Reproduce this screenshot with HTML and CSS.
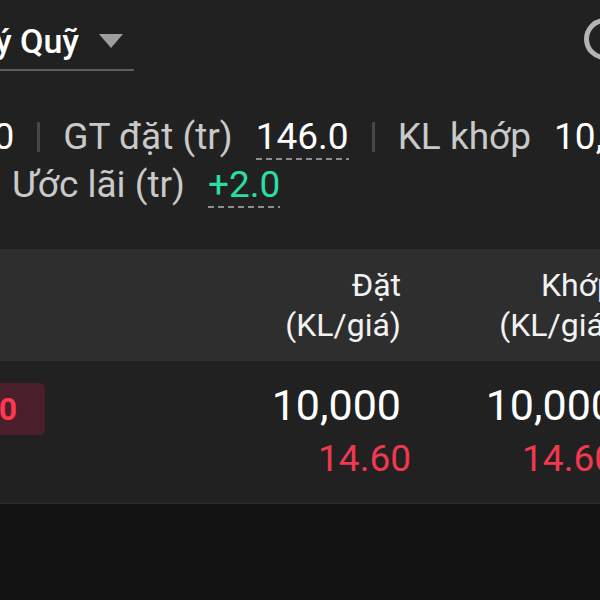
FILE: index.html
```html
<!DOCTYPE html>
<html lang="vi">
<head>
    <meta charset="UTF-8">
    <meta name="viewport" content="width=device-width, initial-scale=1.0">
    <title>Quản lý Quỹ</title>
    <link rel="stylesheet" href="styles.css">
</head>
<body>

    <div class="screen">
        <div class="top">
            <div class="title-bar">
                <div class="fund-select">
                    <span class="fund-name">Quản lý Quỹ</span>
                    <span class="caret"></span>
                </div>
                <svg class="search-icon" width="50" height="50" viewBox="0 0 50 50">
                    <circle cx="21" cy="21" r="18.5" fill="none" stroke="#b4b4b4" stroke-width="5"/>
                    <line x1="35" y1="35" x2="48" y2="48" stroke="#b4b4b4" stroke-width="5" stroke-linecap="round"/>
                </svg>
            </div>

            <div class="stat-row first">
                <span class="stat-value">10,000</span>
                <span class="sep"></span>
                <span class="stat-label">GT đặt (tr)</span>
                <span class="stat-value dashed">146.0</span>
                <span class="sep"></span>
                <span class="stat-label">KL khớp</span>
                <span class="stat-value">10,000</span>
            </div>
            <div class="stat-row second">
                <span class="stat-label">Ước lãi (tr)</span>
                <span class="stat-value dashed up">+2.0</span>
            </div>
        </div>

        <!-- bảng lệnh -->
        <div class="table-head">
            <div class="cell"></div>
            <div class="cell num pad">Đặt<br>(KL/giá)</div>
            <div class="cell num">Khớp<br>(KL/giá)</div>
        </div>

        <div class="table-row">
            <div class="cell">
                <span class="badge">BÁN 10</span>
            </div>
            <div class="cell num">
                <div class="qty pad">10,000</div>
                <div class="price">14.60</div>
            </div>
            <div class="cell num">
                <div class="qty">10,000</div>
                <div class="price">14.60</div>
            </div>
        </div>
    </div>

</body>
</html>
```

FILE: styles.css
```css
body {
    margin: 0;
    background-color: #131313;
    font-family: Roboto, 'Noto Sans', sans-serif;
    color: #fff;
    overflow: hidden;
}

.screen {
    width: 600px;
    height: 600px;
    overflow: hidden;
}

/* phần đầu */
.top {
    background-color: #212121;
    height: 249px;
}

.title-bar {
    display: flex;
    justify-content: space-between;
    align-items: flex-start;
}

.fund-select {
    display: flex;
    justify-content: flex-end;
    align-items: center;
    width: 134px;
    margin-top: 21px;
    padding-bottom: 8px;
    border-bottom: 2px solid #5e5e5e;
    overflow: hidden;
}

.fund-name {
    flex-shrink: 0;
    white-space: nowrap;
    font-size: 34px;
    font-weight: 500;
    line-height: 40px;
}

.caret {
    flex-shrink: 0;
    width: 0;
    height: 0;
    margin: 0 11px 0 20px;
    border-left: 12.5px solid transparent;
    border-right: 12.5px solid transparent;
    border-top: 14px solid #9e9e9e;
}

.search-icon {
    flex-shrink: 0;
    margin-top: 18px;
    margin-right: -34px;
}

.stat-row {
    display: flex;
    align-items: center;
    gap: 23px;
    height: 48px;
    white-space: nowrap;
    font-size: 37px;
    line-height: 48px;
}

.stat-row > span {
    flex-shrink: 0;
}

.stat-row.first {
    margin-top: 42px;
    margin-left: -97px;
}

.stat-row.second {
    padding-left: 12px;
}

.stat-label {
    color: #c9c9c9;
}

.stat-value {
    color: #fff;
}

.stat-value.dashed {
    background-image: repeating-linear-gradient(to right, #8c8c8c 0 6px, transparent 6px 10px);
    background-size: 100% 2px;
    background-position: left bottom 1px;
    background-repeat: no-repeat;
}

.stat-value.up {
    color: #2bdca3;
}

.sep {
    width: 3px;
    height: 30px;
    background-color: #474747;
}

/* bảng */
.table-head,
.table-row {
    display: grid;
    grid-template-columns: 188px 223px 204px;
}

.table-head {
    background-color: #2e2e2e;
    padding: 16px 0;
    font-size: 32px;
    line-height: 40px;
    color: #f2f2f2;
}

.table-row {
    background-color: #212121;
    padding: 17px 0;
    border-bottom: 1px solid #2a2a2a;
}

.cell {
    white-space: nowrap;
}

.num {
    text-align: right;
}

.pad {
    padding-right: 10px;
}

.badge {
    display: inline-block;
    margin-left: -120px;
    margin-top: 5px;
    padding: 0 28px;
    height: 52px;
    line-height: 52px;
    border-radius: 6px;
    background-color: #4a1e2a;
    color: #ff3750;
    font-size: 32px;
    font-weight: 700;
}

.qty {
    font-size: 43px;
    line-height: 54px;
}

.price {
    font-size: 37px;
    line-height: 54px;
    color: #f0384f;
}
```
